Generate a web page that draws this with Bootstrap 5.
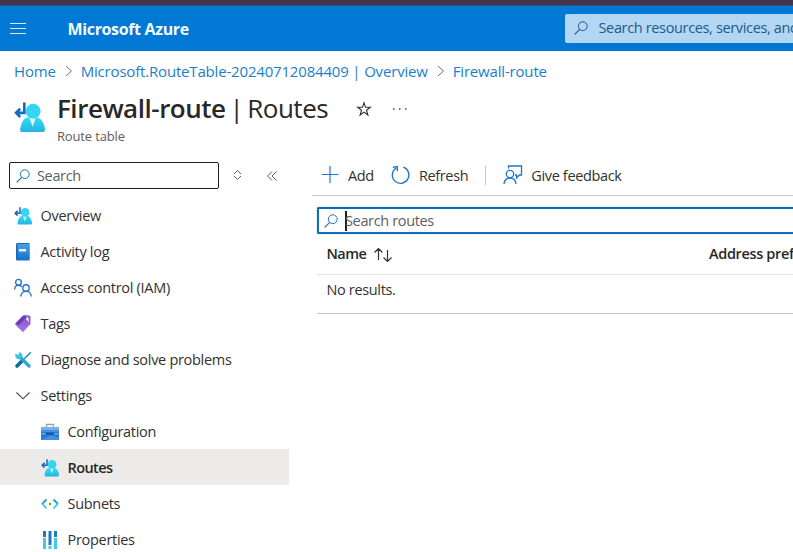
<!DOCTYPE html>
<html lang="en">
<head>
<meta charset="utf-8">
<meta name="viewport" content="width=device-width, initial-scale=1">
<title>Firewall-route | Routes - Microsoft Azure</title>
<link href="https://cdn.jsdelivr.net/npm/bootstrap@5.3.0/dist/css/bootstrap.min.css" rel="stylesheet">
<style>
body{font-family:"Open Sans","Noto Sans",sans-serif;font-size:14.5px;line-height:20px;letter-spacing:-.35px;color:#323130;height:552px;overflow:hidden;white-space:nowrap;background:#fff}
svg{display:block;flex:none;overflow:visible}
.browser-strip{height:6px;background:#46344a;border-bottom:1px solid #24568d}
.topbar{height:45px;background:#0078d4;padding-left:10px}
.brand{font-size:16px;font-weight:700;letter-spacing:-.35px;margin-left:41.500px;flex:0 0 497.500px;color:#f3faff}
.global-search{height:29px;flex:1 1 0;min-width:0;background:#b3d7f2;color:#1d5a90;border-radius:2px 0 0 2px;padding-left:9px;margin-top:-1px}
.global-search span{margin-left:10.500px}
.crumbs{height:41px;padding:0 0 1px 14px;font-size:15px;letter-spacing:-.18px}
.crumbs a{color:#1a7fcb;text-decoration:none}
.crumbs svg{margin:0 8px 0 9px}
.blade-head{height:62px;padding-left:14px}
.blade-title{font-size:26px;line-height:34px;letter-spacing:-.48px;word-spacing:-2.400px;color:#292827;margin:-1px 0 0;font-weight:400}
.blade-title b{font-weight:600}
.blade-sub{font-size:13px;line-height:18px;letter-spacing:-.15px;color:#605e5c;margin-top:2px}
.star{margin-left:28px}
.dots{margin-left:21px}
.side{width:289px}
.side-tools{height:43px;padding:8px 0 0 9px}
.menu-search{flex:0 0 210px;height:27px;border:1px solid #201f1e;border-radius:2px;padding-left:6px;color:#605e5c}
.menu-search span{margin-left:7px}
.menu-item{height:36px;padding:1px 0 0 14px;color:#323130;letter-spacing:-.3px}
.menu-item span{margin-left:8.500px}
.menu-item.sub{padding-left:41px}
.menu-item.current{background:#edebe9;font-weight:600;color:#292827;letter-spacing:-.6px}
.main{margin-left:23px;min-width:0;overflow:hidden}
.commands{height:42px;border-bottom:1px solid #c8c6c4;padding:1px 0 0 9px}
.commands span{margin:2px 0 0 9px}
.commands .i-refresh{margin-left:17px}
.commands .i-feedback{margin-left:17px}
.divider{width:1px;height:19px;background:#c8c6c4;margin-left:17px}
.results{margin-left:5px}
.filter{height:27px;margin-top:11px;border:2px solid #0f6cb8;border-right:0;border-radius:2px 0 0 2px;padding-left:5px;color:#605e5c;box-shadow:0 0 0 1px #e3f4fc}
.caret{width:2px;height:20px;background:#201f1e;margin-left:7px;margin-right:-2px}
.thead-row{height:41px;border-bottom:1px solid #e4e3e2;padding-left:9.500px;font-weight:600;color:#292827;letter-spacing:-.5px}
.name-col{flex:0 0 382.500px}
.address-col{letter-spacing:-.35px}
.empty-row{height:39px;border-bottom:1px solid #c8c6c4;padding:5px 0 0 9.500px}
</style>
<script src="https://cdn.jsdelivr.net/npm/bootstrap@5.3.0/dist/js/bootstrap.bundle.min.js"></script>
</head>
<body>
<svg width="0" height="0" class="position-absolute" aria-hidden="true">
<defs>
<linearGradient id="cy" x1="0" y1="0" x2="0" y2="1"><stop offset="0" stop-color="#35dcf5"/><stop offset="1" stop-color="#25b4e0"/></linearGradient>
<linearGradient id="bl" x1="0" y1="0" x2="0" y2="1"><stop offset="0" stop-color="#4ba0e6"/><stop offset="1" stop-color="#1470c8"/></linearGradient>
<linearGradient id="pu" x1="0" y1="0" x2="0" y2="1"><stop offset="0" stop-color="#8250cc"/><stop offset="1" stop-color="#a67be0"/></linearGradient>
<symbol id="i-route" viewBox="0 0 30 30">
<path d="M6 28V26Q7.500 16.500 12.500 15H23Q28.500 17 30 26V27Q30 29 28 29H8Q6 29 6 28Z" fill="url(#cy)"/>
<path d="M15 15.500L18 24L21 15.500Z" fill="#e4f9ff"/>
<circle cx="18.500" cy="9" r="7.200" fill="#35d5f2"/>
<path d="M10 .5V10.500H3.500M6 6.500L2 10.500L6 14.500" fill="none" stroke="#1468be" stroke-width="2.500"/>
</symbol>
<symbol id="i-search" viewBox="0 0 14 14"><circle cx="8.800" cy="5.200" r="4.400" fill="none" stroke="currentColor"/><path d="M5.700 8.300L.7 13.300" stroke="currentColor" stroke-width="1.200"/></symbol>
<symbol id="i-chev" viewBox="0 0 8 12"><path d="M1 1L6.500 6L1 11" fill="none" stroke="#72706e"/></symbol>
</defs>
</svg>

<div class="browser-strip"></div>
<header class="topbar d-flex align-items-center overflow-hidden">
<svg width="16" height="11" viewBox="0 0 16 11"><path d="M0 .5H16M0 5.500H16M0 10.500H16" stroke="#d6eafa"/></svg>
<div class="brand">Microsoft Azure</div>
<div class="global-search d-flex align-items-center overflow-hidden"><svg width="14" height="14"><use href="#i-search"/></svg><span>Search resources, services, and</span></div>
</header>

<nav class="crumbs d-flex align-items-center" aria-label="Breadcrumb">
<a href="#">Home</a><svg width="8" height="12"><use href="#i-chev"/></svg>
<a href="#">Microsoft.RouteTable-20240712084409 | Overview</a><svg width="8" height="12"><use href="#i-chev"/></svg>
<a href="#">Firewall-route</a>
</nav>

<div class="blade-head d-flex">
<svg class="mt-2" width="31" height="35" viewBox="0 0 31 31"><use href="#i-route" width="31" height="31"/></svg>
<div class="ms-2 ps-1">
<div class="d-flex align-items-center">
<h1 class="blade-title"><b>Firewall-route</b> | Routes</h1>
<svg class="star" width="16" height="16" viewBox="0 0 16 16"><path d="M8 1.700L9.500 6.300H14.300L10.500 9.200L11.900 14L8 11.100L4.100 14L5.500 9.200L1.700 6.300H6.500Z" fill="none" stroke="#323130" stroke-width="1.100"/></svg>
<svg class="dots" width="14" height="2" viewBox="0 0 14 2"><path d="M0 1H1.500M6 1H7.500M12 1H13.500" stroke="#484644" stroke-width="1.400"/></svg>
</div>
<div class="blade-sub">Route table</div>
</div>
</div>

<div class="d-flex">
<aside class="side flex-shrink-0">
<div class="side-tools d-flex align-items-start">
<div class="menu-search d-flex align-items-center"><svg width="14" height="14" color="#2070b8"><use href="#i-search"/></svg><span>Search</span></div>
<svg class="mt-2" width="37" height="10" viewBox="0 0 37 10"><path d="M15 4L18.500 .5L22 4M15 6L18.500 9.500L22 6" fill="none" stroke="#605e5c"/></svg>
<svg class="mt-2" width="33" height="12" viewBox="0 0 33 12"><path d="M16 1.500L11.500 6L16 10.500M20.500 1.500L16 6L20.500 10.500" fill="none" stroke="#605e5c"/></svg>
</div>
<div class="menu-item d-flex align-items-center"><svg width="18" height="18"><use href="#i-route"/></svg><span>Overview</span></div>
<div class="menu-item d-flex align-items-center"><svg width="18" height="18" viewBox="0 0 18 18"><path d="M3.500 0H15.500V16H3.500Z" fill="#2671c4"/><path d="M2 1.500Q2 0 3.500 0H14V1H4V17.500H3.500Q2 17.500 2 16Z" fill="#2166af"/><path d="M3.500 1H15.500V17.500H3.500Z" fill="url(#bl)"/><rect x="5" y="6" width="7" height="2.500" fill="#eaf6ff"/></svg><span>Activity log</span></div>
<div class="menu-item d-flex align-items-center"><svg width="18" height="18" viewBox="0 0 18 18"><g fill="none" stroke="#2672d3" stroke-width="1.400"><circle cx="4.500" cy="3.300" r="2.900"/><path d="M.7 10.500Q.6 6.300 4.500 6.300Q6.500 6.300 7.700 7.800"/><circle cx="12" cy="9" r="3.200"/><path d="M6.700 17.500Q7.200 12.400 12 12.400Q16.800 12.400 17.300 17.500"/></g></svg><span>Access control (IAM)</span></div>
<div class="menu-item d-flex align-items-center"><svg width="18" height="18" viewBox="0 0 18 18"><path d="M1.500 8.500L8.500 1.200Q9 .5 10 .5H15Q16.500 .5 16.500 2V8Q16.500 9 16 9.500L9 17.300L1.500 10Q.8 9.200 1.500 8.500Z" fill="url(#pu)"/><path d="M1.500 8.500L8.500 1.200Q9 .5 10 .5H14L5 10Z" fill="#6b3bb8"/><circle cx="13.500" cy="4" r="1.500" fill="#eee3ff"/><path d="M12 .5Q15.500 3 14.500 7" fill="none" stroke="#d6c3f3"/></svg><span>Tags</span></div>
<div class="menu-item d-flex align-items-center"><svg width="18" height="18" viewBox="0 0 18 18"><path d="M16.800 1.200L9.500 8.500" stroke="#1a8bc0" stroke-width="1.500"/><path d="M8.500 9.500L3 15" stroke="#176a9f" stroke-width="3.600" stroke-linecap="round"/><path d="M5.500 5.500L15 15" stroke="#2aa5d4" stroke-width="3.200" stroke-linecap="round"/><path d="M1.700 2.300L4.300 4.600L5.200 1.200Q9 1.500 8.300 5.800L6 8.300Q1.300 8.500 1.200 4Z" fill="#36c4e9"/></svg><span>Diagnose and solve problems</span></div>
<div class="menu-item d-flex align-items-center"><svg width="18" height="18" viewBox="0 0 18 18"><path d="M2.500 5.500L9 11.800L15.500 5.500" fill="none" stroke="#484644" stroke-width="1.100"/></svg><span>Settings</span></div>
<div class="menu-item sub d-flex align-items-center"><svg width="18" height="18" viewBox="0 0 18 18"><path d="M5.500 4V1.500H12.500V4" fill="none" stroke="#a3a3a3" stroke-width="1.300"/><rect y="4" width="18" height="13" rx=".5" fill="#2b7cd3"/><rect y="4" width="18" height="3" fill="#76b0ef"/><rect y="7" width="18" height="2" fill="#4a91e0"/><path d="M0 10H5V11.500H0ZM13 10H18V11.500H13Z" fill="#5ba4ee"/><path d="M5 9.500H13V12H5Z" fill="#1659a8"/><path d="M0 17L10 12L18 15V17Z" fill="#448fe4"/></svg><span>Configuration</span></div>
<div class="menu-item sub current d-flex align-items-center"><svg width="18" height="18"><use href="#i-route"/></svg><span>Routes</span></div>
<div class="menu-item sub d-flex align-items-center"><svg width="18" height="18" viewBox="0 0 18 18"><path d="M5.500 4.500L1 9" stroke="#2795d6" stroke-width="1.800"/><path d="M1 8.500L5.500 13.500" stroke="#35c9ed" stroke-width="1.800"/><path d="M12.500 4.500L17 9" stroke="#2795d6" stroke-width="1.800"/><path d="M17 8.500L12.500 13.500" stroke="#35c9ed" stroke-width="1.800"/><circle cx="9" cy="9" r="1.300" fill="#78a72c"/></svg><span>Subnets</span></div>
<div class="menu-item sub d-flex align-items-center"><svg width="18" height="18" viewBox="0 0 18 18"><path d="M2 0H5V6H2ZM7.500 0H10.500V14H7.500ZM13 0H16V6H13Z" fill="#1d79bb"/><path d="M2 7H5V18H2ZM7.500 15H10.500V18H7.500ZM13 7H16V18H13Z" fill="#42c8ed"/></svg><span>Properties</span></div>
</aside>

<main class="main flex-grow-1">
<div class="commands d-flex align-items-center">
<svg width="18" height="18" viewBox="0 0 18 18"><path d="M9 0V17M.5 8.500H17.500" stroke="#2479c6" stroke-width="1.200"/></svg><span>Add</span>
<svg class="i-refresh" width="19" height="20" viewBox="0 0 19 20"><path d="M12.300 2.200A8.300 8.300 0 1 1 5.200 3M1.800 2.300L6.300 1.600V6.300" fill="none" stroke="#1c77c3" stroke-width="1.300"/></svg><span>Refresh</span>
<div class="divider"></div>
<svg class="i-feedback" width="19" height="20" viewBox="0 0 19 20"><g fill="none" stroke="#1c77c3" stroke-width="1.300"><circle cx="7" cy="9" r="3.700"/><path d="M1 19Q1.500 13 7 13Q12.500 13 13 19M5.500 3.500V1H18.500V10H16.500L13.500 13V10H12"/></g></svg><span>Give feedback</span>
</div>
<div class="results">
<div class="filter d-flex align-items-center"><svg width="14" height="14" color="#2070b8"><use href="#i-search"/></svg><div class="caret"></div><span>Search routes</span></div>
<div class="thead-row d-flex align-items-center overflow-hidden"><div class="name-col d-flex align-items-center"><span>Name</span><svg class="ms-2" width="18" height="15" viewBox="1 0 18 15"><path d="M5.500 13V1.500M1.500 5.500L5.500 1.500L9.500 5.500M14.500 3V14.500M10.500 10.500L14.500 14.500L18.500 10.500" fill="none" stroke="#323130" stroke-width="1.200"/></svg></div><span class="address-col">Address pref</span></div>
<div class="empty-row">No results.</div>
</div>
</main>
</div>
</body>
</html>
